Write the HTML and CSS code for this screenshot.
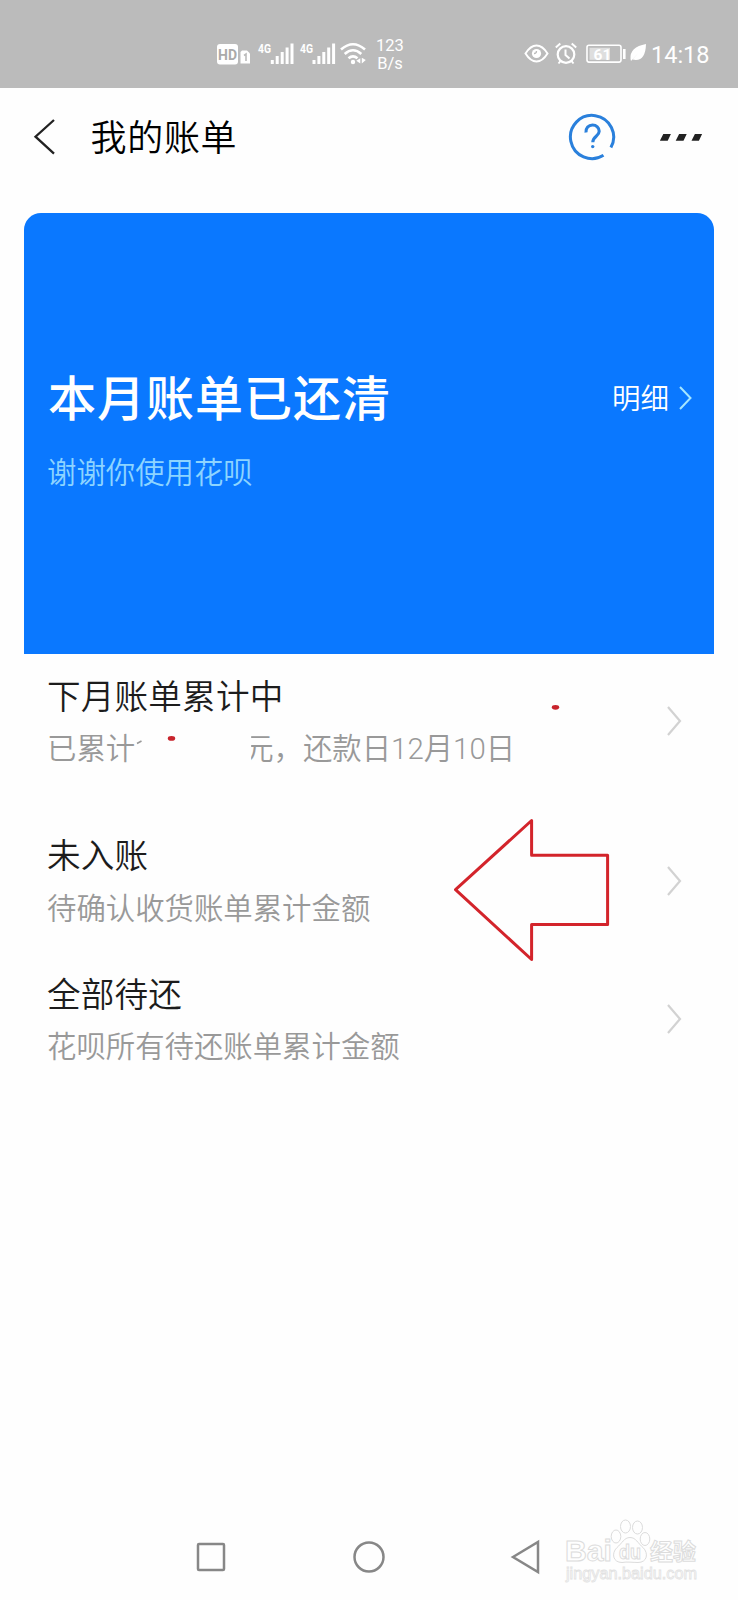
FILE: index.html
```html
<!DOCTYPE html>
<html lang="zh-CN">
<head>
<meta charset="utf-8">
<title>我的账单</title>
<link rel="stylesheet" href="styles.css">
</head>
<body>
<div class="screen">
  <div class="status">
    <svg class="status-net" width="152" height="28" viewBox="216 40 152 28" fill="none">
      <rect x="217" y="44" width="21" height="20.500" rx="3" fill="#fff"/>
      <text x="227.500" y="59.500" class="hd" text-anchor="middle">HD</text>
      <path d="M242 50.500h5l3 3v10h-9.500v-11.500z" fill="#fff"/>
      <path d="M244 55.500l2-1.500v7" stroke="#bbb" stroke-width="1.600"/>
      <text x="258" y="53" class="gen" textLength="13" lengthAdjust="spacingAndGlyphs">4G</text>
      <path d="M272.300 60v4M277.200 56v8M282.200 52v12M287.100 47.500v16.500M292 43.500v20.500" stroke="#fff" stroke-width="3"/>
      <text x="300" y="53" class="gen" textLength="13" lengthAdjust="spacingAndGlyphs">4G</text>
      <path d="M314 60v4M318.900 56v8M323.800 52v12M328.700 47.500v16.500M333.600 43.500v20.500" stroke="#fff" stroke-width="3"/>
      <path d="M341 49.500q12-10.500 24 0M344.700 54q8.300-7.500 16.600 0M348.500 58.300q4.500-4 9 0" stroke="#fff" stroke-width="2.600"/>
      <circle cx="353" cy="62" r="2.200" fill="#fff"/>
      <path d="M360.300 58.200v5.300l-4-2.800zM361.800 57.700v5.800l4-3.500z" fill="#fff"/>
    </svg>
    <div class="speed"><span>123</span><span>B/s</span></div>
    <svg class="status-sys" width="124" height="28" viewBox="524 40 124 28" fill="none">
      <path d="M525.500 53.500q5-8 11-8t11 8q-5 8-11 8t-11-8z" stroke="#fff" stroke-width="2"/>
      <circle cx="536.500" cy="53.500" r="4.600" fill="#fff"/>
      <path d="M534 53.500a2.500 2.500 0 0 0 2.500-2.500" stroke="#bbb" stroke-width="1.300"/>
      <circle cx="566" cy="54.500" r="8.300" stroke="#fff" stroke-width="2.200"/>
      <path d="M565.500 49.500v5.500l4 3.500M555.800 47.500l4.500-4M571.700 43.500l4.500 4M560.500 61l-2 2.500M571.500 61l2 2.500" stroke="#fff" stroke-width="2"/>
      <rect x="587" y="45.300" width="34" height="16.800" rx="2" stroke="#fff" stroke-width="1.600"/>
      <rect x="589.500" y="47.800" width="20.500" height="12" fill="#dedede"/>
      <text x="602.500" y="59.500" class="level" text-anchor="middle">61</text>
      <path d="M624.300 49v10" stroke="#fff" stroke-width="2.600"/>
      <path d="M630.500 59q-1-12 15.500-15q-.5 18.500-13.500 15.500l7-8-8.500 9.500z" fill="#fff"/>
    </svg>
    <span class="time">14:18</span>
  </div>

  <div class="header">
    <svg width="23" height="38" viewBox="33 118 23 38" fill="none"><path d="M54 120L35.500 136.700L54 153.700" stroke="#222" stroke-width="2.300"/></svg>
    <span class="header-title">我的账单</span>
    <svg class="help" width="50" height="50" viewBox="-25 -25 50 50" fill="none" stroke="#2a80dc">
      <path d="M18.900 10.500A21.600 21.600 0 1 0 11.500 18.300" stroke-width="3"/>
      <path d="M-6-4.500c-.4-4.500 2.600-7.500 6.500-7.500s6.700 2.600 6.700 6.300C7.200-.500.800-.800.800 5.300" stroke-width="3.100"/>
      <circle cx=".700" cy="9.600" r="1.700" fill="#2a80dc" stroke="none"/>
    </svg>
    <svg width="44" height="10" viewBox="659 132 44 10" fill="#222"><path d="M663.300 134h7.600l-3.200 6.800h-7.800zM679.100 134h7.600l-3.200 6.800h-7.800zM694.900 134h7.200l-3.200 6.800h-7.400z"/></svg>
  </div>

  <div class="card">
    <div class="card-main">
      <span class="card-title">本月账单已还清</span>
      <span class="detail">明细</span>
      <svg width="15" height="26" viewBox="0 0 15 26" fill="none"><path d="M2 2L12.500 13L2 24" stroke="#a5e6ff" stroke-width="2"/></svg>
    </div>
    <div class="card-sub">谢谢你使用花呗</div>
  </div>

  <div class="list">
    <div class="row row-next">
      <div class="row-text">
        <div class="row-title">下月账单累计中</div>
        <div class="row-sub"><span>已累计</span><svg class="trace" width="7" height="30" viewBox="0 0 7 30" fill="none"><path d="M1 9.500L5.500 7" stroke="#999" stroke-width="1.600"/></svg><span class="masked">元</span><span>，还款日12月10日</span></div>
      </div>
      <svg class="chev" width="16" height="32" viewBox="0 0 16 32"><path d="M2 2L14 16L2 30"/></svg>
    </div>
    <div class="row row-pending">
      <div class="row-text">
        <div class="row-title">未入账</div>
        <div class="row-sub">待确认收货账单累计金额</div>
      </div>
      <svg class="chev" width="16" height="32" viewBox="0 0 16 32"><path d="M2 2L14 16L2 30"/></svg>
    </div>
    <div class="row row-all">
      <div class="row-text">
        <div class="row-title">全部待还</div>
        <div class="row-sub">花呗所有待还账单累计金额</div>
      </div>
      <svg class="chev" width="16" height="32" viewBox="0 0 16 32"><path d="M2 2L14 16L2 30"/></svg>
    </div>
  </div>

  <div class="nav">
    <svg width="32" height="36" viewBox="-16 -18 32 36"><rect x="-13" y="-13" width="26" height="26" rx="1"/></svg>
    <svg width="32" height="36" viewBox="-16 -18 32 36"><circle r="14.500"/></svg>
    <svg width="32" height="36" viewBox="-16 -18 32 36"><path d="M-13 0L12-15V15z"/></svg>
  </div>

  <svg class="marks" width="738" height="320" viewBox="0 660 738 320" fill="none">
    <ellipse cx="171.500" cy="738.400" rx="3.700" ry="2.400" fill="#c8242c"/>
    <ellipse cx="555.500" cy="707.300" rx="3.700" ry="2.400" fill="#c8242c"/>
    <path d="M455.500 889.700L531.600 820.500V855.200H607.600V924.600H531.600V959.500z" stroke="#d3242b" stroke-width="3" stroke-linejoin="round"/>
  </svg>

  <svg class="watermark" width="140" height="68" viewBox="562 1518 140 68">
    <text x="565" y="1561" class="wm-big" textLength="47" lengthAdjust="spacingAndGlyphs">Bai</text>
    <g class="wm-line">
      <ellipse cx="616" cy="1536.500" rx="4.800" ry="6.500"/>
      <ellipse cx="625.500" cy="1526.500" rx="5" ry="6.500"/>
      <ellipse cx="637.500" cy="1527.500" rx="5" ry="6.500"/>
      <ellipse cx="645" cy="1539" rx="4.800" ry="6.500"/>
      <path d="M630 1537.500c6 0 8 6 13 10c6 6 4 15-5 15c-5 0-11-1-16 0c-9 0-11-9-5-15c5-4 7-10 13-10z"/>
    </g>
    <text x="619" y="1558.500" class="wm-du" textLength="22" lengthAdjust="spacingAndGlyphs">du</text>
    <text x="650" y="1560" class="wm-cn">经验</text>
    <text x="566" y="1579" class="wm-url" textLength="131" lengthAdjust="spacingAndGlyphs">jingyan.baidu.com</text>
  </svg>
</div>
</body>
</html>
```
FILE: styles.css
```css
* { box-sizing: border-box; }
body {
  margin: 0;
  background: #fefefe;
  font-family: Roboto, "Noto Sans CJK SC", sans-serif;
}
svg { display: block; flex: none; }
.screen {
  position: relative;
  width: 738px;
  height: 1600px;
  display: flex;
  flex-direction: column;
  overflow: hidden;
  background: #fefefe;
}
.status {
  height: 88px;
  padding: 20px 28px 0 216px;
  background: #bbb;
  display: flex;
  align-items: center;
  color: #fff;
}
.speed {
  width: 32px;
  margin-left: 6px;
  padding-top: 1px;
  display: flex;
  flex-direction: column;
  align-items: center;
  font-size: 16.500px;
  line-height: 18px;
}
.status-sys { margin-left: 118px; }
.time { margin-left: 3px; padding-top: 1px; font-size: 23.500px; line-height: 28px; white-space: nowrap; }
.hd { font: 700 14px Roboto, sans-serif; fill: #aaa; }
.gen { font: 700 13.500px Roboto, sans-serif; fill: #fff; }
.level { font: 700 15.500px Roboto, sans-serif; fill: #fff; }

.header {
  height: 125px;
  padding: 0 35px 27px 33px;
  display: flex;
  align-items: center;
}
.header-title {
  margin-left: 34.500px;
  padding-top: 3px;
  font-size: 36px;
  letter-spacing: .7px;
  line-height: 50px;
  font-weight: 350;
  color: #000;
}
.help { margin-left: auto; margin-right: 42px; }

.card {
  height: 441px;
  margin: 0 24px;
  padding: 155px 21px 0 24px;
  border-radius: 17px 17px 0 0;
  background: #0a78ff;
}
.card-main { height: 64px; display: flex; align-items: center; color: #fff; }
.card-main svg { margin-bottom: 4px; }
.card-title {
  flex: 1;
  font-size: 48px;
  letter-spacing: 1px;
  line-height: 64px;
  font-weight: 500;
}
.detail { margin-right: 9px; font-size: 28.500px; line-height: 40px; font-weight: 350; }
.card-sub {
  margin-top: 19px;
  margin-left: -1px;
  font-size: 29.400px;
  line-height: 44px;
  color: #8dd4ff;
  font-weight: 350;
}

.list { flex: 1; padding: 19px 56px 0 47px; }
.row { display: flex; align-items: center; justify-content: space-between; }
.row-next { height: 101px; }
.row-pending { height: 102px; margin-top: 58px; }
.row-all { height: 101px; margin-top: 36.500px; }
.row-text { height: 100%; display: flex; flex-direction: column; justify-content: space-between; }
.row-title { font-size: 33.600px; line-height: 50px; letter-spacing: .2px; font-weight: 350; color: #1c1c1c; }
.row-sub {
  display: flex;
  align-items: center;
  font-size: 29.400px;
  line-height: 50px;
  font-weight: 350;
  color: #999;
}
.trace { margin-left: 1px; }
/* The amount is hidden, along with the left edge of the unit */
.masked { margin-left: 101px; clip-path: inset(0 0 0 7px); }
.chev { fill: none; stroke: #d2d2d2; stroke-width: 2.200; }
.row .chev { margin-bottom: 5px; }

.nav {
  height: 86px;
  padding: 0 196px 0 195px;
  display: flex;
  justify-content: space-between;
  align-items: center;
}
.nav svg { fill: none; stroke: #878787; stroke-width: 2.500; }

.marks { position: absolute; left: 0; top: 660px; }
.watermark { position: absolute; left: 562px; top: 1518px; }
.watermark text, .wm-line { fill: #fefefe; stroke: #dcdcdc; stroke-width: 1px; }
.wm-big { font: 700 30px "Liberation Sans", sans-serif; }
.wm-du { font: 700 20px "Liberation Sans", sans-serif; }
.wm-cn { font: 700 23px "Noto Sans CJK SC", sans-serif; }
.watermark .wm-url { font: 400 16px "Liberation Sans", sans-serif; stroke: #e2e2e2; stroke-width: .8px; }
```
